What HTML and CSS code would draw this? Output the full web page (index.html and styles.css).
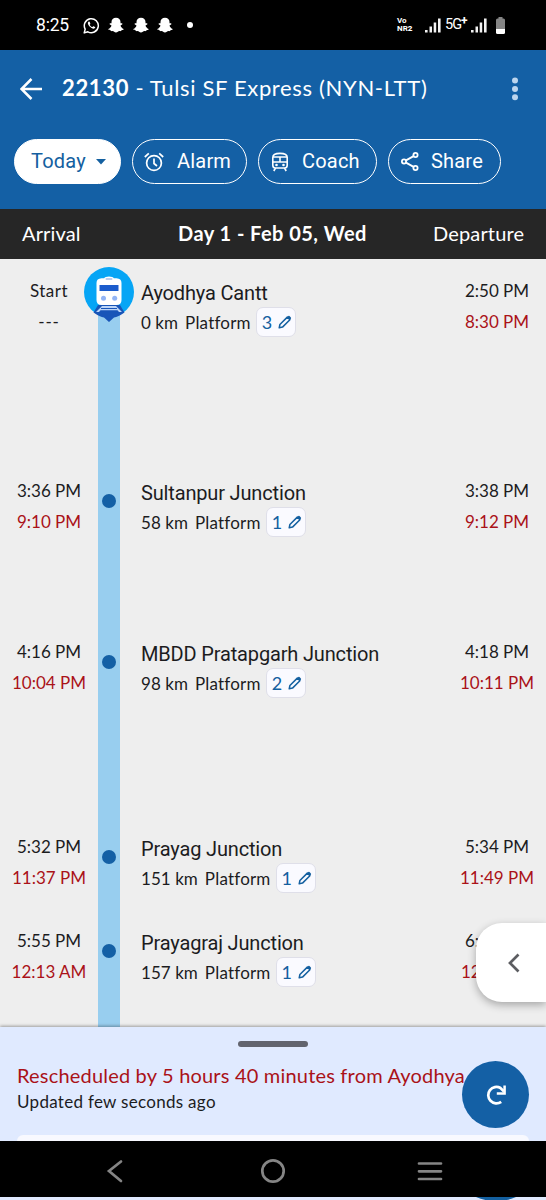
FILE: index.html
```html
<!DOCTYPE html>
<html lang="en">
<head>
<meta charset="utf-8">
<title>22130 - Tulsi SF Express</title>
<link rel="stylesheet" href="styles.css">
</head>
<body>
<svg class="defs" width="0" height="0">
  <symbol id="ghost" viewBox="0 0 16 16"><path d="M8 .8C5.200.8 3.500 2.500 3.500 5v1.300l-1.700-.1-.2 1L3.500 8.500C3 10.200 2 11.300.3 12c0 1 1 1 2.300 1.300.2.800.4 1 1.800.8 1.600 0 2 1.500 3.600 1.500s2-1.500 3.600-1.500c1.400.2 1.600 0 1.800-.8 1.300-.3 2.300-.3 2.300-1.300-1.700-.7-2.700-1.800-3.200-3.500l1.900-1.300-.2-1-1.700.1V5C12.500 2.500 10.800.8 8 .8z" fill="#fff"/></symbol>
  <symbol id="bars" viewBox="0 0 16 15"><path d="M0 12h2.600v2.600H0zM4.500 8.500H7v6.100H4.500zM8.700 4.500h2.500v10.100H8.700zM13 .5h2.600v14.100H13z" fill="#f2f2f2"/></symbol>
  <symbol id="pencil" viewBox="0 0 14 14"><path d="M1.200 12.800l.7-3.300 7.400-7.400 2.600 2.600-7.400 7.400z" fill="none" stroke="#1460a0" stroke-width="1.500" stroke-linejoin="round"/><path d="M9.300 2.100l1-1q.6-.5 1.200 0l1.400 1.400q.5.600 0 1.200l-1 1z" fill="#1460a0"/></symbol>
</svg>
<div class="screen">
  <div class="status">
    <span class="clock">8:25</span>
    <svg class="wa" viewBox="0 0 17 17"><path d="M1.200 15.900l1-3.800a7 7 0 1 1 2.700 2.700z" fill="none" stroke="#fff" stroke-width="1.500" stroke-linejoin="round"/><path d="M5.800 4.600l-.9 1c-.5 2.300 3.400 6.500 6 6.200l1.300-1.100c.2-.5 0-.7-1.700-1.500-.6-.2-.8.700-1.300.9-1.200-.4-2-1.200-2.500-2.300.2-.4.8-.7.600-1.200C6.700 5 6.500 4.500 5.800 4.600z" fill="#fff"/></svg>
    <svg class="ghost"><use href="#ghost"/></svg>
    <svg class="ghost"><use href="#ghost"/></svg>
    <svg class="ghost"><use href="#ghost"/></svg>
    <i class="more-dot"></i>
    <span class="vonr"><span>Vo</span><span>NR<b>2</b></span></span>
    <svg class="bars"><use href="#bars"/></svg>
    <span class="net">5G<sup>+</sup></span>
    <svg class="bars"><use href="#bars"/></svg>
    <svg class="battery" viewBox="0 0 9 17"><path d="M2.500 0h4v1.500h1q1.500 0 1.500 1.500V12H0V3q0-1.500 1.500-1.500h1z" fill="#858585"/><path d="M0 12h9v3.500q0 1.500-1.500 1.500h-6Q0 17 0 15.500z" fill="#fff"/></svg>
  </div>

  <header class="header">
    <div class="title-row">
      <svg class="back" viewBox="0 0 22 22"><path d="M11.500 1L1.500 11l10 10M2 11h20" fill="none" stroke="#fff" stroke-width="2.500"/></svg>
      <h1 class="title"><b>22130</b> - Tulsi SF Express (NYN-LTT)</h1>
      <svg class="kebab" viewBox="0 0 6 24"><g fill="#bcd5ee"><circle cx="3" cy="3.500" r="3"/><circle cx="3" cy="12" r="3"/><circle cx="3" cy="20.300" r="3"/></g></svg>
    </div>
    <div class="chips">
      <button class="chip chip-today"><span>Today</span><svg width="10" height="6" viewBox="0 0 10 6"><path d="M0 0h10L5 5.500z" fill="#1460a0"/></svg></button>
      <button class="chip chip-alarm"><svg width="20" height="20" viewBox="0 0 20 20"><g fill="none" stroke="#fff" stroke-width="1.700"><circle cx="10" cy="11" r="7.400"/><path d="M10 6.500v5l3 2.500M.8 5l4-3.600M19.200 5l-4-3.600"/></g></svg><span>Alarm</span></button>
      <button class="chip chip-coach"><svg width="18" height="20" viewBox="0 0 18 20"><g fill="none" stroke="#fff" stroke-width="1.600"><path d="M1.800 5.500Q1.800 1.400 9 1.400t7.200 4.100v7.800q0 2.700-2.700 2.700h-9q-2.700 0-2.700-2.700zM2 5h14M2 10h14M9 5v5M4.500 16l-1.700 3M13.500 16l1.700 3"/></g><circle cx="5.500" cy="13" r="1.300" fill="#fff"/><circle cx="12.500" cy="13" r="1.300" fill="#fff"/></svg><span>Coach</span></button>
      <button class="chip chip-share"><svg width="18" height="19" viewBox="0 0 18 19"><g fill="none" stroke="#fff" stroke-width="1.800"><circle cx="3" cy="9.500" r="2.100"/><circle cx="14.500" cy="3" r="2.100"/><circle cx="14.500" cy="16" r="2.100"/><path d="M5 8.400l7.600-4.300M5 10.600l7.600 4.300"/></g></svg><span>Share</span></button>
    </div>
  </header>

  <div class="columns">
    <span class="col-arr">Arrival</span><b class="col-day">Day 1 - Feb 05, Wed</b><span class="col-dep">Departure</span>
  </div>

  <main class="list">
    <section class="stop stop-1">
      <div class="times"><span class="start">Start</span><span class="none">---</span></div>
      <div class="track track-start">
        <svg class="train" viewBox="0 0 50 56"><circle cx="25" cy="25" r="25" fill="#06a5f5"/><path d="M14 38h22l4.500 7.500Q34 50 30 50.500L25 55l-5-4.500Q16 50 9.500 45.500z" fill="#1855b8"/><path d="M18 39h14l6 6h-3l-1.500-1.800h-17L15 45h-3z" fill="#bcd5f8"/><path d="M17 41.500h16" stroke="#1855b8" stroke-width="1"/><path d="M12.500 16q0-4.500 5-4.800h2.700q.8-1.700 4.800-1.700t4.800 1.700h2.700q5 .3 5 4.800v17q0 5-5 5h-15q-5 0-5-5z" fill="#fff"/><rect x="21.500" y="11.200" width="7" height="1.500" rx=".7" fill="#a8bde8"/><path d="M15.500 18h19v6h-19z" fill="#1c5ccc"/><circle cx="19.500" cy="31.300" r="2.500" fill="#93b5f5"/><circle cx="30.700" cy="31.300" r="2.500" fill="#93b5f5"/></svg>
      </div>
      <div class="station"><span class="name">Ayodhya Cantt</span><div class="info"><span>0 km</span><span class="pf">Platform</span><span class="plat">3<svg><use href="#pencil"/></svg></span></div></div>
      <div class="times"><span>2:50 PM</span><span class="late">8:30 PM</span></div>
    </section>
    <section class="stop stop-2">
      <div class="times"><span>3:36 PM</span><span class="late">9:10 PM</span></div>
      <div class="track"><i class="dot"></i></div>
      <div class="station"><span class="name">Sultanpur Junction</span><div class="info"><span>58 km</span><span class="pf">Platform</span><span class="plat">1<svg><use href="#pencil"/></svg></span></div></div>
      <div class="times"><span>3:38 PM</span><span class="late">9:12 PM</span></div>
    </section>
    <section class="stop stop-3">
      <div class="times"><span>4:16 PM</span><span class="late">10:04 PM</span></div>
      <div class="track"><i class="dot"></i></div>
      <div class="station"><span class="name">MBDD Pratapgarh Junction</span><div class="info"><span>98 km</span><span class="pf">Platform</span><span class="plat">2<svg><use href="#pencil"/></svg></span></div></div>
      <div class="times"><span>4:18 PM</span><span class="late">10:11 PM</span></div>
    </section>
    <section class="stop stop-4">
      <div class="times"><span>5:32 PM</span><span class="late">11:37 PM</span></div>
      <div class="track"><i class="dot"></i></div>
      <div class="station"><span class="name">Prayag Junction</span><div class="info"><span>151 km</span><span class="pf">Platform</span><span class="plat">1<svg><use href="#pencil"/></svg></span></div></div>
      <div class="times"><span>5:34 PM</span><span class="late">11:49 PM</span></div>
    </section>
    <section class="stop stop-5">
      <div class="times"><span>5:55 PM</span><span class="late">12:13 AM</span></div>
      <div class="track"><i class="dot"></i></div>
      <div class="station"><span class="name">Prayagraj Junction</span><div class="info"><span>157 km</span><span class="pf">Platform</span><span class="plat">1<svg><use href="#pencil"/></svg></span></div></div>
      <div class="times times-cut"><span>6:</span><span class="late">12</span></div>
    </section>
    <div class="drawer"><svg width="12" height="20" viewBox="0 0 12 20"><path d="M10.500 1.500L2 10l8.500 8.500" fill="none" stroke="#5c5d61" stroke-width="2.700"/></svg></div>
  </main>

  <div class="sheet">
    <i class="grip"></i>
    <p class="alert">Rescheduled by 5 hours 40 minutes from Ayodhya</p>
    <p class="updated">Updated few seconds ago</p>
    <div class="card"></div>
    <div class="refresh"><svg width="20" height="20" viewBox="0 0 20 20"><path d="M15.200 16.800A8.200 8.200 0 1 1 14.500 3L18 6.500" fill="none" stroke="#fff" stroke-width="2.700"/><path d="M18.600.5v8h-7.800" fill="none" stroke="#fff" stroke-width="2.500"/></svg></div>
  </div>

  <nav class="nav">
    <svg class="nav-icons" viewBox="0 0 546 56"><g fill="none" stroke="#858585" stroke-width="2.700" stroke-linecap="round"><path d="M121 20.500L109 30l12 10"/><circle cx="273" cy="30" r="10.700"/><path d="M419 22.500h22M419 30.300h22M419 38h22"/></g></svg>
  </nav>
  <div class="strip"><svg width="40" height="3" viewBox="0 0 40 3"><path d="M0 0h40Q31 4 20 4T0 0z" fill="#1460a0"/></svg></div>
</div>
</body>
</html>
```
FILE: styles.css
```css
* { box-sizing: border-box; }
body { margin: 0; font-family: Lato, "Noto Sans", sans-serif; color: #1c1c1e; font-variant-ligatures: none; }
.defs { position: absolute; }
.screen { width: 546px; height: 1200px; display: flex; flex-direction: column; overflow: hidden; background: #eee; }
svg { display: block; flex: none; }

.status { height: 50px; background: #000; color: #fff; display: flex; align-items: center; padding: 0 41px 0 36px; font-family: Roboto, sans-serif; flex: none; }
.clock { font-size: 17.5px; width: 47px; letter-spacing: -.2px; }
.wa { width: 17px; height: 17px; margin-right: 8px; }
.ghost { width: 16px; height: 16px; margin-right: 8.500px; }
.more-dot { width: 6px; height: 6px; border-radius: 50%; background: #fff; margin-left: 5px; }
.vonr { margin-left: auto; width: 31px; display: flex; flex-direction: column; font-size: 8px; line-height: 8px; font-weight: 700; }
.bars { width: 16px; height: 15px; }
.net { font-size: 14.5px; width: 31px; padding-left: 5px; letter-spacing: -1px; white-space: nowrap; line-height: 16px; }
.vonr + .bars { margin-right: -1px; margin-left: -3px; }
.net sup { font-size: 12px; line-height: 0; vertical-align: 4px; font-weight: 700; }
.battery { width: 9px; height: 17px; margin-left: 9px; }

.header { height: 159px; background: #1460a5; color: #fff; padding-top: 14px; flex: none; }
.title-row { height: 50px; display: flex; align-items: center; padding: 0 28px 0 20px; }
.back { width: 22px; height: 22px; margin-right: 20px; }
.title { margin: 0; font-size: 22px; font-weight: 400; letter-spacing: .66px; flex: 1; white-space: nowrap; padding-bottom: 3px; }
.kebab { width: 6px; height: 24px; }
.chips { display: flex; gap: 11px; padding: 25px 14px 0; }
.chip { height: 45px; border: 1.500px solid #fff; border-radius: 23px; background: transparent; color: #fff; display: flex; align-items: center; font: 400 20px Roboto, sans-serif; letter-spacing: .2px; padding: 0; }
.chip span { padding-bottom: 2px; }
.chip-today { width: 107px; background: #fff; color: #1460a0; padding-left: 16px; gap: 10px; }
.chip-alarm { width: 115px; padding-left: 11px; gap: 13px; }
.chip-coach { width: 119px; padding-left: 12px; gap: 13px; }
.chip-share { width: 113px; padding-left: 12px; gap: 12px; }

.columns { height: 50px; background: #262626; color: #fff; display: flex; align-items: center; font-size: 20px; flex: none; white-space: nowrap; letter-spacing: .15px; padding-bottom: 2px; }
.col-arr { width: 178px; padding-left: 22px; }
.col-day { width: 255px; letter-spacing: .45px; }

.list { height: 768px; position: relative; background: #eee; display: flex; flex-direction: column; flex: none; }
.stop { display: grid; grid-template-columns: 98px 22px 328px 98px; flex: none; }
.stop-1 { height: 200px; }
.stop-2 { height: 161px; }
.stop-3 { height: 195px; }
.stop-4 { height: 94px; }
.stop-5 { height: 118px; }
.times { padding-top: 16px; display: flex; flex-direction: column; align-items: center; font-size: 17px; line-height: 31px; white-space: nowrap; }
.start { letter-spacing: .5px; }
.none { letter-spacing: .8px; }
.times-cut { align-items: flex-start; padding-left: 13px; }
.times-cut span:first-child { padding-left: 4px; }
.late { color: #aa1218; }
.track { background: #98ceef; padding: 35px 4px 0; }
.dot { display: block; width: 14px; height: 14px; border-radius: 50%; background: #1460a5; }
.track-start { background: linear-gradient(#eee 45px, #98ceef 45px); padding: 8px 0 0; }
.train { width: 50px; height: 56px; margin-left: -14px; }
.station { padding: 19px 0 0 21px; }
.name { display: block; font: 400 20px/31px Roboto, sans-serif; letter-spacing: -.16px; white-space: nowrap; }
.info { height: 30px; display: flex; align-items: center; font-size: 17px; margin-top: -2px; white-space: nowrap; letter-spacing: .05px; }
.pf { margin: 0 5px 0 7px; letter-spacing: .2px; }
.plat { width: 40px; height: 30px; border: 1.500px solid #dfdfe9; border-radius: 7px; background: #fafaff; color: #1460a0; display: flex; align-items: center; padding-left: 5px; gap: 6px; font-size: 18px; }
.plat svg { width: 14px; height: 14px; }
.drawer { position: absolute; right: 0; top: 664px; width: 70px; height: 79px; background: #fff; border-radius: 26px 0 0 26px; box-shadow: 0 3px 8px rgba(0,0,0,.3); padding: 30px 0 0 32px; }

.sheet { height: 114px; position: relative; background: #e0eaff; box-shadow: 0 -1px 3px rgba(0,0,0,.35); padding: 14px 17px 0; flex: none; }
.grip { display: block; width: 70px; height: 6px; border-radius: 3px; background: #62646e; margin: 0 auto; }
.alert { margin: 15px 0 0; color: #aa1218; font-size: 20px; line-height: 26px; letter-spacing: .19px; white-space: nowrap; }
.updated { margin: 1px 0 0; font-size: 17px; line-height: 26px; letter-spacing: .3px; }
.card { height: 6px; margin-top: 20px; background: #f8f9ff; border-radius: 6px 6px 0 0; }
.refresh { position: absolute; right: 17px; top: 34px; width: 67px; height: 67px; border-radius: 50%; background: #1460a5; display: grid; place-items: center; }
.nav { height: 56px; background: #000; position: relative; flex: none; }
.nav-icons { width: 546px; height: 56px; }
.strip { height: 3px; background: #e0eaff; flex: none; padding-left: 476px; }
```
